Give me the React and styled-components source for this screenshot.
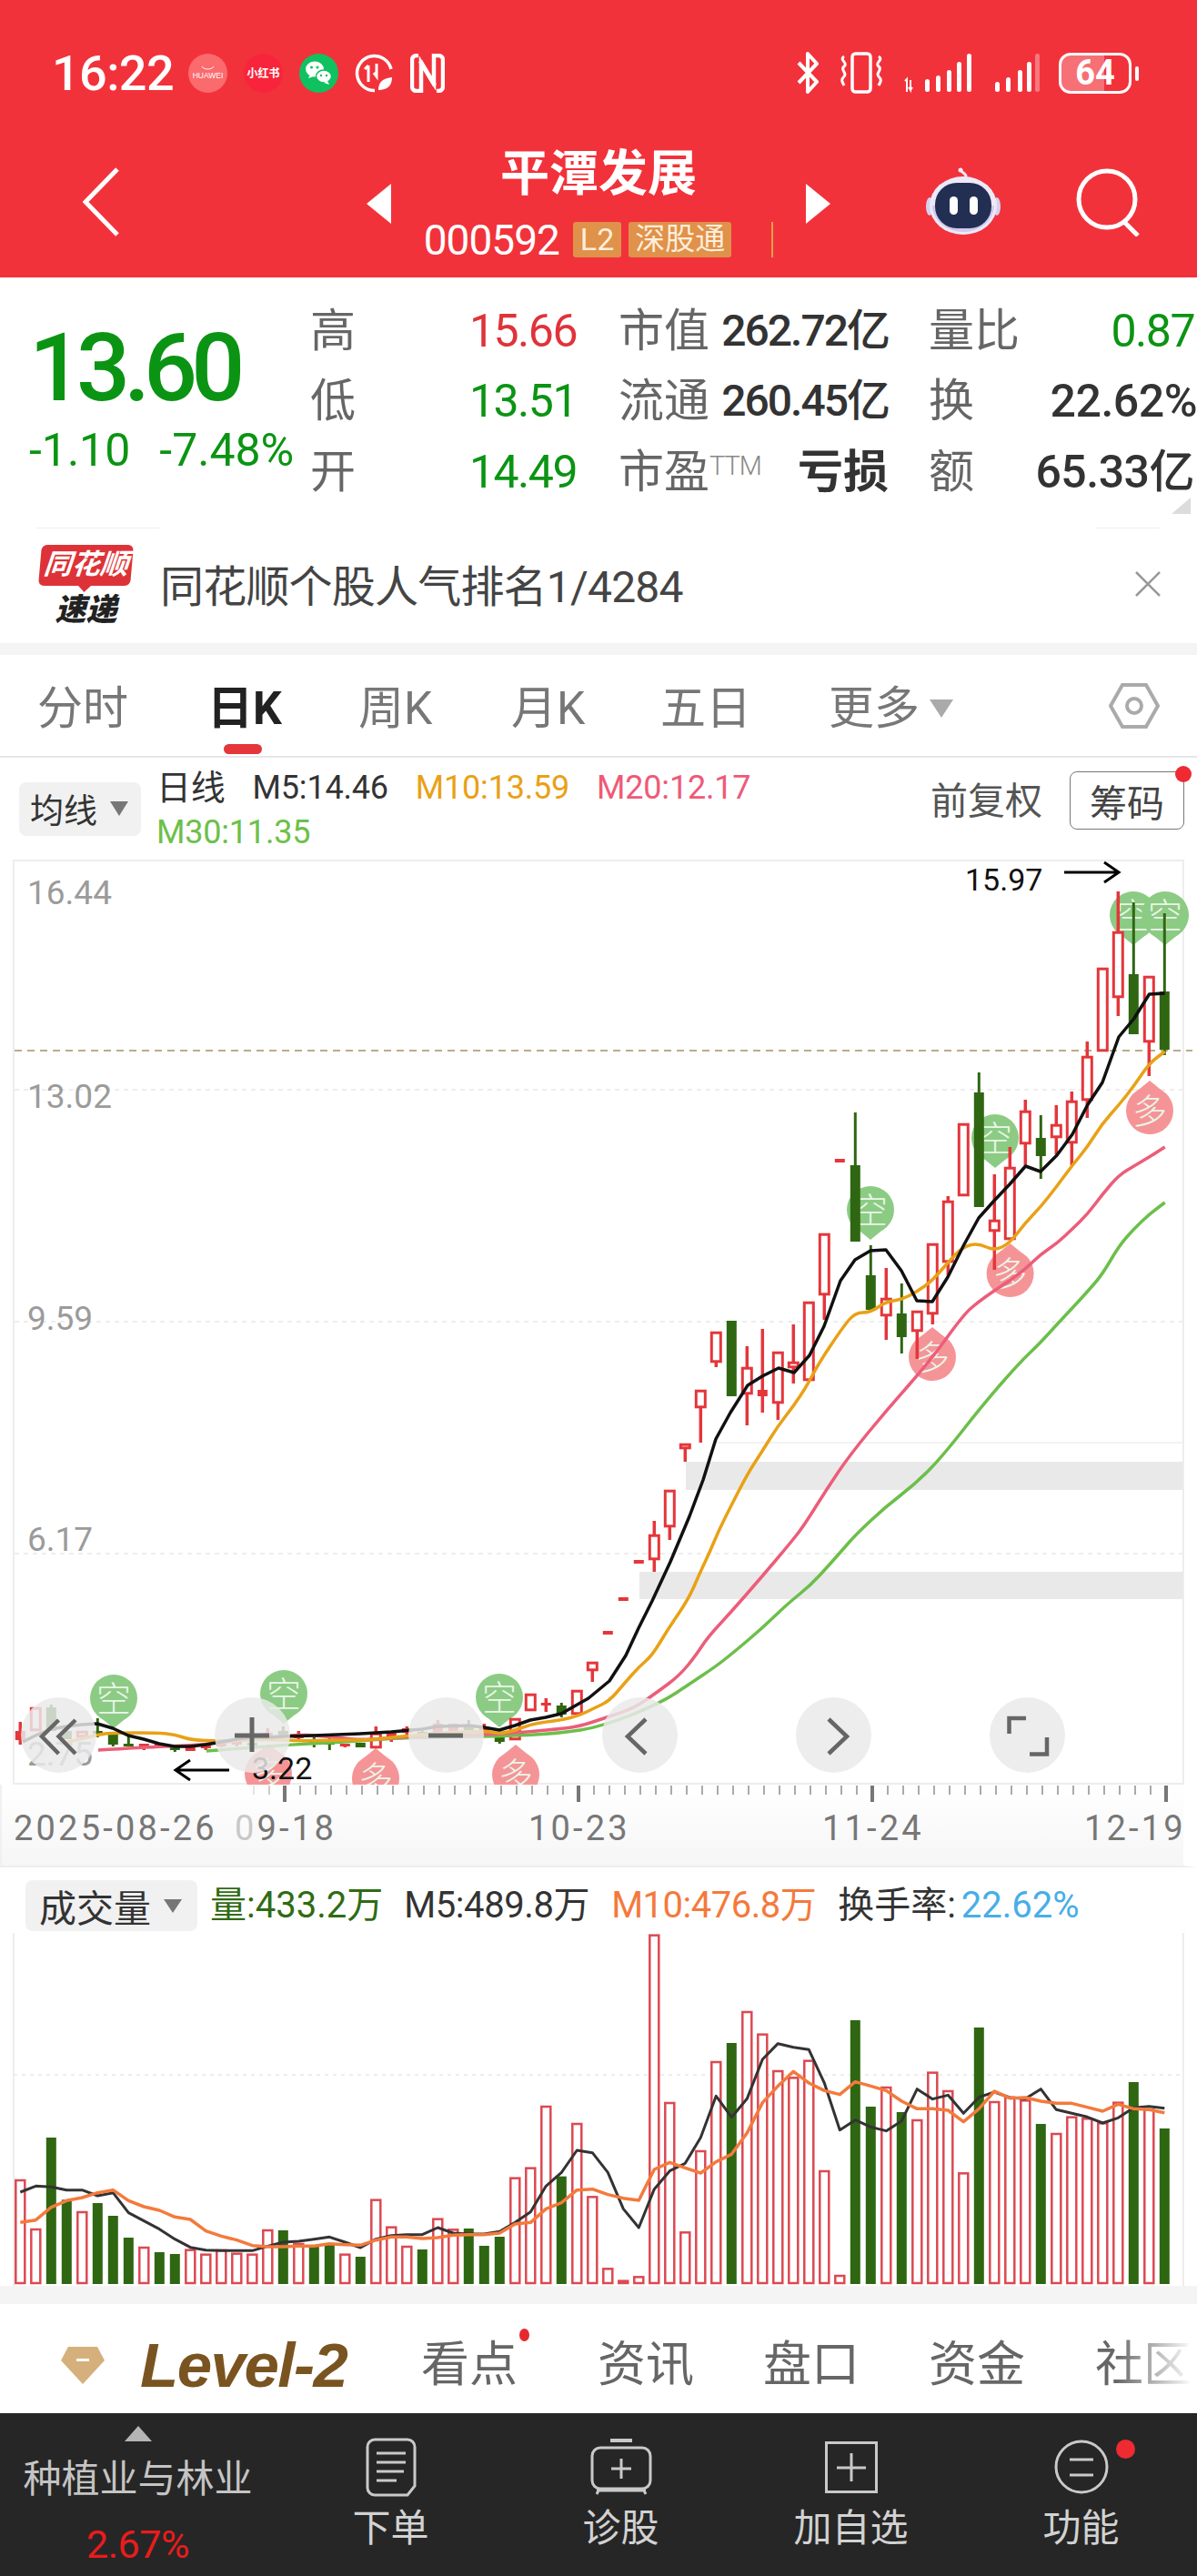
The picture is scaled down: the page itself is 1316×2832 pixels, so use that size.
import React from 'react';
import styled, { createGlobalStyle } from 'styled-components';

const Global = createGlobalStyle`
  html, body { margin: 0; padding: 0; background: #fff; }
  body { font-family: Roboto, "Noto Sans CJK SC", sans-serif; }
  * { box-sizing: border-box; }
`;
const CJK = `Roboto, "Noto Sans CJK SC", sans-serif`;
const GREEN = '#0b9413', RED = '#e0333a', CAND_R = '#e4363b', CAND_G = '#2f6612';

const Page = styled.div`width: 1316px; height: 2832px; overflow: hidden; background: #fff; position: relative; display: flex; flex-direction: column;`;

/* ---------- header ---------- */
const Header = styled.header`height: 305px; background: #f2323a; color: #fff; flex: none;`;
const StatusBar = styled.div`height: 160px; display: flex; align-items: center; padding: 0 72px 0 57px;`;
const Clock = styled.div`font-size: 54px; font-weight: 500; letter-spacing: -0.6px; width: 150px;`;
const StatusLeft = styled.div`display: flex; align-items: center; gap: 18px;`;
const StatusRight = styled.div`margin-left: auto; display: flex; align-items: center; gap: 20px;`;
const Battery = styled.div`position: relative; width: 80px; height: 45px; border: 3px solid #fff; border-radius: 13px;
  display: flex; align-items: center; justify-content: center; font-size: 38px; font-weight: 700;
  background: linear-gradient(90deg, rgba(255,255,255,.3) 64%, transparent 64%);
  &::after { content: ''; position: absolute; right: -11px; top: 12px; width: 4px; height: 16px; background: #fff; border-radius: 2px; }
`;
const NavBar = styled.div`height: 145px; display: grid; grid-template-columns: 403px 510px 1fr;`;
const BackCell = styled.div`padding: 24px 0 0 91px;`;
const CenterCell = styled.div`display: flex; align-items: flex-start; justify-content: space-between; padding-top: 42px;`;
const TriH = styled.div`width: 0; height: 0; border-top: 22px solid transparent; border-bottom: 22px solid transparent;
  ${p => p.$left ? 'border-right: 27px solid #fff;' : 'border-left: 27px solid #fff;'}`;
const StockBlock = styled.div`display: flex; flex-direction: column; align-items: center; margin-top: -40px;`;
const StockName = styled.div`font-size: 54px; font-weight: 700; line-height: 60px;`;
const StockSub = styled.div`display: flex; align-items: center; height: 39px; margin-top: 22px; gap: 8px;`;
const StockCode = styled.span`font-size: 46px; letter-spacing: -1px; margin-right: 7px;`;
const Tag = styled.span`height: 39px; padding: 0 ${p => p.$pad}px; background: #e0914a; border-radius: 3px; font-size: ${p => p.$f}px; line-height: 38px; color: #fdeeda;`;
const OrangeTick = styled.span`width: 2px; height: 39px; background: #e7a04a; margin-left: 36px;`;
const NavRight = styled.div`display: flex; align-items: flex-start; padding: 24px 0 0 104px; gap: 82px;`;

/* ---------- quote ---------- */
const Quote = styled.section`height: 275px; position: relative; display: grid; grid-template-columns: 341px 339px 341px 295px; padding-top: 20px; grid-auto-rows: 77.5px; overflow: hidden; flex: none;
  &::after { content: ''; position: absolute; right: 7px; top: 242px; border-left: 21px solid transparent; border-bottom: 18px solid #dcdcdc; }`;
const PriceCell = styled.div`grid-row: 1 / span 3; padding-left: 32px; display: flex; flex-direction: column;`;
const BigPrice = styled.div`font-size: 104px; font-weight: 500; color: ${GREEN}; letter-spacing: -7px; line-height: 106px; margin: 27px 0 0 0;`;
const ChangeRow = styled.div`display: flex; gap: 32px; font-size: 50px; color: ${GREEN}; line-height: 56px; margin-top: 9px;`;
const Stat = styled.div`display: flex; justify-content: space-between; align-items: center; padding-right: ${p => p.$pr}px; white-space: nowrap; min-width: 0;`;
const StatLabel = styled.span`font-size: 50px; color: #666; line-height: 1;`;
const Ttm = styled.sup`font-size: 29px; font-weight: 300; color: #888; vertical-align: 14px; line-height: 0; letter-spacing: -1px;`;
const StatValue = styled.span`font-size: ${p => p.$size || 50}px; color: ${p => p.$color || '#333'}; font-weight: ${p => p.$w || 400}; letter-spacing: ${p => p.$ls ?? -1.5}px; line-height: 1;`;
const FaintRow = styled.div`height: 1px; display: flex; justify-content: space-between; padding: 0 41px 0 40px; flex: none;`;
const Faint = styled.span`width: ${p => p.$w}px; height: 1px; background: #eee;`;

const AdRow = styled.div`height: 126px; display: flex; align-items: center; padding: 0 40px 0 44px; flex: none;`;
const AdLogo = styled.div`width: 101px; display: flex; flex-direction: column; align-items: center; margin-right: 31px;`;
const AdBox = styled.div`position: relative; width: 101px; height: 45px; background: #dd3338; border-radius: 6px; color: #fff; font-size: 31px; font-weight: 700; font-style: italic; line-height: 44px; text-align: center; transform: skewX(-5deg);
  &::after { content: ''; position: absolute; left: 44px; bottom: -7px; border-left: 7px solid transparent; border-right: 7px solid transparent; border-top: 7px solid #dd3338; }`;
const AdBrand = styled.div`font-size: 34px; font-weight: 900; font-style: italic; color: #222; line-height: 40px; margin-top: 6px;`;
const AdText = styled.div`font-size: 48px; color: #444; letter-spacing: -.8px; margin-top: -6px;`;
const AdClose = styled.div`margin-left: auto;`;
const Gap = styled.div`height: ${p => p.$h}px; background: #f4f4f4; flex: none;`;

/* ---------- tabs ---------- */
const Tabs = styled.nav`height: 113px; display: grid; grid-template-columns: 187px 166px 168px 164px 185px 1fr 97px; padding: 0 0 0 41px; align-items: center; border-bottom: 2px solid #e6e6e6; flex: none;`;
const Tab = styled.div`position: relative; font-size: 50px; color: ${p => p.$on ? '#222' : '#777'}; font-weight: ${p => p.$on ? 700 : 400}; line-height: 1; display: flex; align-items: center; gap: 11px; margin-top: 6px;
  ${p => p.$on && `&::after { content: ''; position: absolute; left: 18px; top: 64px; width: 42px; height: 11px; background: ${CAND_R}; border-radius: 6px; }`}`;
const SmallTri = styled.span`width: 0; height: 0; border-left: ${p => p.$s}px solid transparent; border-right: ${p => p.$s}px solid transparent; border-top: ${p => p.$h}px solid ${p => p.$c || '#aaa'}; display: inline-block;`;
const HexCell = styled.div`display: flex; align-items: center;`;

/* ---------- legend ---------- */
const Legend = styled.div`height: 112px; display: flex; align-items: center; padding: 0 0 0 21px; position: relative; flex: none;`;
const Selector = styled.div`width: ${p => p.$w}px; height: ${p => p.$h}px; background: #f1f1f1; border-radius: 8px; display: flex; align-items: center; font-size: ${p => p.$f}px; color: #333; padding-left: ${p => p.$pl}px; gap: ${p => p.$g}px; flex: none;`;
const LegendText = styled.div`margin-left: 17px; width: 740px; display: flex; flex-wrap: wrap; column-gap: 30px; align-self: flex-start; padding-top: 9px; line-height: 49px;`;
const MaLabel = styled.span`font-size: ${p => p.$f || 36}px; color: ${p => p.$c}; letter-spacing: -.2px; white-space: nowrap;`;
const Break = styled.span`flex-basis: 100%; height: 0;`;
const Adjust = styled.div`position: absolute; left: 1023px; top: 23px; font-size: 41px; color: #555; line-height: 50px;`;
const ChipBtn = styled.div`position: absolute; left: 1176px; top: 15px; width: 126px; height: 64px; border: 1.5px solid #777; border-radius: 8px; font-size: 41px; color: #444; display: flex; align-items: center; justify-content: center;
  &::after { content: ''; position: absolute; right: -9px; top: -7px; width: 18px; height: 18px; border-radius: 50%; background: #ee2a33; }`;

/* ---------- chart ---------- */
const ChartPanel = styled.div`position: relative; width: 1316px; height: 1017px; flex: none;`;
const ChartSvg = styled.svg`display: block;`;
const Controls = styled.div`position: absolute; left: 23px; top: 921px; display: flex; gap: 130px;`;
const Ctrl = styled.div`width: 83px; height: 83px; border-radius: 50%; background: rgba(233,233,233,.84);`;

const TimeAxis = styled.div`height: 91px; position: relative; border-bottom: 2px solid #ededed; flex: none;
  background: linear-gradient(180deg, #fff 0%, #f6f6f6 100%);
  border-left: 2px solid #f0f0f0; border-right: 15px solid #fff;`;
const DateRow = styled.div`position: absolute; left: 13px; top: 26px; display: grid; grid-template-columns: 243px 323px 323px 288px 1fr; width: 1290px;`;
const DateText = styled.span`font-size: 38px; letter-spacing: 3.2px; color: ${p => p.$c || '#777'}; line-height: 44px; white-space: nowrap;`;
const FadeZero = styled.span`color: #c8c8c8;`;

/* ---------- volume ---------- */
const VolPanel = styled.section`height: 460px; flex: none; position: relative;`;
const VolHead = styled.div`height: 72px; padding: 14px 0 0 28px; display: flex; align-items: flex-start;`;
const VolLabel = styled.span`font-size: 40px; line-height: 56px; color: ${p => p.$c || '#333'}; margin-left: ${p => p.$ml || 0}px; white-space: nowrap; letter-spacing: ${p => p.$ls ?? 0}px;`;

/* ---------- bottom ---------- */
const BottomTabs = styled.div`height: 120px; display: grid; grid-template-columns: 87px 309px 194px 182px 182px 183px 1fr; padding: 14px 0 0 67px; align-items: center; position: relative; overflow: hidden; flex: none;
  &::after { content: ''; position: absolute; right: 0; top: 0; bottom: 0; width: 90px; background: linear-gradient(90deg, rgba(255,255,255,0), rgba(255,255,255,.95) 90%); }`;
const Gold = styled.div`font-family: "Liberation Sans", sans-serif; font-size: 69px; font-weight: 700; font-style: italic; color: #7a5420; letter-spacing: -1.5px; line-height: 1;`;
const BTab = styled.div`position: relative; justify-self: start; font-size: 53px; color: #666; line-height: 1; white-space: nowrap;
  ${p => p.$dot && `&::after { content: ''; position: absolute; right: -13px; top: -14px; width: 11px; height: 14px; border-radius: 50%; background: #e42a2f; }`}`;
const Dock = styled.footer`height: 179px; background: #262626; display: grid; grid-template-columns: 303px repeat(4, 253px); flex: none;`;
const Sector = styled.div`display: flex; flex-direction: column; align-items: center; padding-top: 14px;`;
const UpTri = styled.span`width: 0; height: 0; border-left: 15px solid transparent; border-right: 15px solid transparent; border-bottom: 17px solid #b5b5b5;`;
const SectorName = styled.div`font-size: 42px; color: #c4c4c4; line-height: 50px; margin-top: 17px; white-space: nowrap;`;
const SectorPct = styled.div`font-size: 43px; color: #ea1c1c; line-height: 50px; margin-top: 21px; letter-spacing: -.5px;`;
const DockItem = styled.div`position: relative; display: flex; flex-direction: column; align-items: center; padding-top: 26px;`;
const DockIconBox = styled.div`height: 66px; display: flex; align-items: center; justify-content: center;`;
const DockLabel = styled.div`font-size: 42px; color: #d2d2d2; line-height: 48px; margin-top: 11px;`;
const DockDot = styled.span`position: absolute; left: 165px; top: 29px; width: 21px; height: 21px; border-radius: 50%; background: #ee2a33;`;

/* ---------- data ---------- */
const X = i => 22.3 + 17 * i;
// [high, top, bottom, low, kind]  r hollow red, R filled red, g green
const K = [
  [1893,1903,1913,1918,'R'],[1877,1877,1903,1903,'r'],[1874,1877,1903,1903,'g'],[1900,1903,1912,1912,'g'],[1903,1903,1910,1912,'r'],
  [1889,1903,1906,1910,'g'],[1905,1907,1918,1920,'g'],[1909,1917,1919,1920,'g'],[1917,1917,1922,1924,'R'],[1916,1917,1919,1920,'R'],
  [1921,1921,1924,1926,'g'],[1919,1919,1925,1925,'R'],[1917,1918,1922,1924,'R'],[1916,1917,1919,1921,'R'],[1914,1915,1917,1920,'R'],
  [1915,1916,1918,1920,'g'],[1900,1905,1908,1912,'R'],[1898,1903,1908,1908,'g'],[1903,1907,1911,1912,'R'],[1910,1915,1917,1921,'g'],
  [1910,1915,1917,1924,'g'],[1917,1917,1919,1921,'R'],[1916,1916,1921,1921,'g'],[1898,1905,1922,1922,'r'],[1903,1903,1910,1915,'R'],
  [1898,1900,1905,1908,'R'],[1903,1904,1908,1909,'g'],[1891,1895,1906,1906,'R'],[1895,1895,1903,1904,'R'],[1891,1897,1902,1902,'g'],
  [1895,1898,1903,1904,'R'],[1905,1908,1915,1917,'g'],[1889,1889,1913,1913,'r'],[1862,1862,1881,1881,'r'],[1867,1872,1874,1882,'R'],
  [1872,1875,1885,1888,'g'],[1858,1858,1885,1885,'r'],[1827,1827,1837,1849,'r'],[1793,1793,1797,1797,'R'],[1756,1756,1760,1760,'R'],
  [1715,1715,1719,1719,'R'],[1672,1687,1715,1728,'r'],[1638,1638,1679,1693,'r'],[1587,1587,1593,1607,'r'],[1528,1528,1548,1586,'r'],
  [1464,1464,1498,1503,'r'],[1452,1452,1535,1535,'g'],[1480,1503,1533,1567,'r'],[1461,1528,1535,1553,'R'],[1486,1486,1543,1561,'r'],
  [1456,1497,1504,1521,'r'],[1431,1431,1518,1518,'r'],[1356,1356,1424,1451,'r'],[1274,1274,1278,1278,'R'],[1223,1281,1365,1365,'g'],
  [1369,1402,1440,1440,'g'],[1394,1427,1447,1473,'r'],[1411,1444,1470,1488,'g'],[1441,1441,1464,1494,'r'],[1367,1367,1445,1456,'r'],
  [1315,1320,1388,1402,'r'],[1235,1235,1315,1315,'r'],[1179,1201,1327,1327,'g'],[1291,1341,1354,1396,'r'],[1261,1283,1363,1363,'r'],
  [1209,1221,1258,1281,'r'],[1226,1251,1271,1296,'g'],[1215,1236,1251,1269,'r'],[1200,1210,1257,1281,'r'],[1145,1161,1210,1229,'r'],
  [1064,1064,1156,1156,'r'],[980,1024,1097,1117,'r'],[992,1071,1137,1137,'g'],[1073,1073,1146,1183,'r'],[1004,1090,1154,1160,'g'],
];
const pts = a => a.map(p => p.join(',')).join(' ');
const smooth = a => {
  let d = `M${a[0][0]} ${a[0][1]}`;
  for (let i = 1; i < a.length - 1; i++) {
    const mx = (a[i][0] + a[i + 1][0]) / 2, my = (a[i][1] + a[i + 1][1]) / 2;
    d += ` Q${a[i][0]} ${a[i][1]} ${mx} ${my}`;
  }
  const l = a[a.length - 1];
  return `${d} L${l[0]} ${l[1]}`;
};
const MA5 = [[25,1915],[39,1908],[56,1901],[73,1898],[90,1896],[107,1895],[124,1900],[141,1908],[158,1912],[175,1917],[192,1920],[209,1920],[226,1918],[243,1915],[260,1912],[277,1910],[294,1910],[311,1909],[345,1908],[396,1906],[430,1904],[464,1901],[481,1898],[515,1897],[532,1899],[549,1902],[566,1897],[583,1891],[600,1888],[617,1884],[647,1867],[670,1848],[688,1820],[702,1790],[717,1760],[737,1717],[758,1667],[773,1627],[787,1582],[803,1553],[822,1523],[838,1513],[856,1504],[873,1509],[890,1490],[906,1458],[924,1408],[940,1385],[957,1375],[974,1374],[991,1397],[1008,1430],[1025,1431],[1042,1404],[1059.5,1369],[1076,1339],[1093,1320],[1110,1302],[1127.5,1282],[1144,1288],[1162,1270],[1179,1247],[1195.5,1215],[1212,1190],[1230,1140],[1246.6,1120],[1263.5,1093],[1280.7,1092]];
const MA10 = [[67,1917],[107,1907],[124,1905],[173,1905],[193,1907],[210,1913],[243,1914],[293,1912],[333,1914],[360,1913],[400,1913],[413,1912],[450,1908],[490,1905],[533,1903],[550,1906],[567,1902],[583,1896],[600,1893],[617,1891],[637,1886],[653,1878],[670,1870],[687,1850],[703,1832],[717,1820],[735,1790],[757,1758],[770,1728],[780,1707],[790,1683],[803,1657],[822,1620],[837,1597],[855,1568],[873,1545],[888,1522],[900,1499],[926,1460],[940,1443],[957,1443],[974,1431],[991,1429],[1008,1420],[1025,1408],[1042,1388],[1059.5,1370],[1076,1367],[1093,1375],[1110,1367],[1127.5,1344],[1144,1327],[1162,1304],[1179,1281],[1195.5,1261],[1212,1235],[1230,1215],[1246.6,1194],[1263.5,1169],[1280.7,1156]];
const MA20 = [[108,1924],[157,1921],[207,1919],[233,1917],[293,1910],[328,1907],[347,1908],[377,1911],[400,1913],[450,1909],[533,1907],[567,1905],[613,1901],[637,1898],[667,1888],[697,1878],[723,1860],[747,1842],[765,1820],[778,1800],[803,1773],[838,1733],[870,1695],[884,1677],[909,1637],[934,1600],[975,1550],[1022,1497],[1059.5,1445],[1076,1431],[1093,1419],[1110,1408],[1127.5,1395],[1144,1379],[1162,1367],[1179,1351],[1195.5,1335],[1212,1313],[1230,1292],[1246.6,1282],[1263.5,1272],[1280.7,1261]];
const MA30 = [[227,1925],[267,1922],[320,1918],[380,1915],[447,1910],[547,1909],[613,1906],[663,1898],[727,1872],[760,1850],[787,1832],[806,1817],[838,1790],[866,1763],[891,1743],[912,1720],[927,1703],[941,1687],[973,1657],[1008,1630],[1037,1600],[1080,1545],[1120,1499],[1144,1476],[1162,1456],[1179,1438],[1195.5,1420],[1212,1401],[1230,1370],[1246.6,1351],[1263.5,1335],[1280.7,1322]];
const KONG = [[125,1867],[312,1862],[549,1866],[957,1330],[1094,1251],[1246,1006],[1281,1006]];
const DUO = [[295,1950],[413,1955],[567,1951],[1025,1492],[1110.6,1400],[1264,1221]];
const GREYBANDS = [[754,1607,31],[703,1728,30]];

const V = [[1008,'r'],[1170,'r'],[870,'g'],[1075,'g'],[1113,'r'],[1086,'g'],[1128,'g'],[1200,'g'],[1230,'r'],[1248,'g'],[1254,'g'],[1238,'r'],[1253,'r'],[1239,'r'],[1250,'r'],[1253,'r'],[1173,'r'],[1176,'g'],[1218,'r'],[1228,'g'],[1220,'g'],[1253,'r'],[1263,'g'],[1073,'r'],[1163,'r'],[1227,'r'],[1239,'g'],[1136,'r'],[1171,'r'],[1170,'g'],[1227,'g'],[1197,'g'],[1001,'r'],[968,'r'],[765,'r'],[998,'g'],[822,'r'],[1063,'r'],[1300,'r'],[1340,'R'],[1327,'r'],[200,'r'],[753,'r'],[1180,'r'],[912,'r'],[618,'r'],[558,'g'],[453,'r'],[527,'r'],[648,'r'],[670,'r'],[614,'r'],[978,'r'],[1323,'r'],[483,'g'],[768,'g'],[702,'r'],[786,'g'],[810,'r'],[653,'r'],[714,'r'],[985,'r'],[507,'g'],[750,'r'],[735,'r'],[745,'r'],[825,'g'],[855,'r'],[800,'r'],[805,'r'],[820,'r'],[752,'r'],[687,'g'],[775,'r'],[840,'g']];
const VM5 = [1050,1030,1033,1043,1043,1062,1052,1118,1145,1172,1205,1232,1241,1243,1243,1243,1228,1215,1212,1205,1198,1215,1233,1205,1193,1190,1190,1167,1185,1188,1188,1180,1150,1115,1030,985,912,920,985,1105,1167,1040,980,955,870,733,803,742,612,560,572,580,690,845,812,835,848,815,710,743,730,790,737,720,738,742,710,778,790,802,822,805,772,767,773];
const VM10 = [1150,1142,1100,1078,1068,1052,1043,1078,1098,1110,1132,1140,1178,1195,1208,1226,1230,1230,1228,1228,1220,1223,1225,1208,1198,1198,1203,1200,1192,1190,1190,1185,1155,1150,1105,1085,1043,1040,1058,1070,1077,975,952,970,987,950,925,855,755,700,652,690,715,728,686,700,715,750,775,775,780,818,775,717,740,738,750,757,757,770,783,760,775,778,788];
const vy = z => 2060 + z / 3;

/* ---------- drawings ---------- */
const Pin = ({ x, y, kind }) => {
  const up = kind === 'k';
  const fill = up ? '#8ccb84' : '#f59497';
  const tip = up ? y + 33 : y - 33;
  const b = up ? y + 20 : y - 20;
  return (
    <g>
      <circle cx={x} cy={y} r={26} fill={fill} />
      <path d={`M${x - 16} ${b} L${x} ${tip} L${x + 16} ${b} Z`} fill={fill} />
      <text x={x} y={y + 14} textAnchor="middle" fontSize="38" fontFamily={CJK} fontWeight="300" fill="#eaf6e8">{up ? '空' : '多'}</text>
    </g>
  );
};
const Candle = ({ i, d }) => {
  const [h, t, b, l, k] = d;
  const x = X(i);
  const c = k === 'g' ? CAND_G : CAND_R;
  return (
    <g>
      {h < t && <line x1={x} x2={x} y1={h} y2={t} stroke={c} strokeWidth={k === 'g' ? 3 : 3.5} />}
      {l > b && <line x1={x} x2={x} y1={b} y2={l} stroke={c} strokeWidth={k === 'g' ? 3 : 3.5} />}
      {k === 'r'
        ? <rect x={x - 5} y={t + 1.2} width={10} height={b - t - 2.4} fill="#fff" stroke={c} strokeWidth={3} />
        : <rect x={x - 5.5} y={t} width={11} height={Math.max(b - t, 3)} fill={c} />}
    </g>
  );
};
const Arrow = ({ x1, x2, y }) => {
  const dir = x2 > x1 ? -1 : 1;
  return <path d={`M${x1} ${y} H${x2} M${x2 + dir * 16} ${y - 11} L${x2} ${y} L${x2 + dir * 16} ${y + 11}`} fill="none" stroke="#000" strokeWidth={3} />;
};
const AxisText = ({ x, y, children }) => <text x={x} y={y} fontFamily={CJK} fontSize="37" fill="#9b9b9b">{children}</text>;

const PriceChart = () => (
  <ChartSvg width="1316" height="1017" viewBox="0 945 1316 1017">
    <line x1="15" x2="1301" y1="946" y2="946" stroke="#ededed" strokeWidth="2" />
    <line x1="15" x2="1301" y1="1961" y2="1961" stroke="#ededed" strokeWidth="2" />
    <line x1="15" x2="15" y1="945" y2="1962" stroke="#ededed" strokeWidth="2" />
    <line x1="1301" x2="1301" y1="945" y2="1962" stroke="#ededed" strokeWidth="2" />
    {[1198, 1453, 1708].map(y => <line key={y} x1="16" x2="1300" y1={y} y2={y} stroke="#dcdcdc" strokeDasharray="5 5" />)}
    <line x1="787" x2="1300" y1="1586" y2="1586" stroke="#e6e6e6" />
    {GREYBANDS.map(([x, y, h]) => <rect key={y} x={x} y={y} width={1300 - x} height={h} fill="#e9e9e9" />)}
    <AxisText x={30} y={994}>16.44</AxisText>
    <AxisText x={30} y={1218}>13.02</AxisText>
    <AxisText x={30} y={1462}>9.59</AxisText>
    <AxisText x={30} y={1705}>6.17</AxisText>
    <AxisText x={30} y={1941}>2.75</AxisText>
    <line x1="16" x2="1311" y1="1155" y2="1155" stroke="#bcab8c" strokeWidth="2" strokeDasharray="8 6" />
    {KONG.map(([x, y]) => <Pin key={x} x={x} y={y} kind="k" />)}
    {DUO.map(([x, y]) => <Pin key={x} x={x} y={y} kind="d" />)}
    {K.map((d, i) => <Candle key={i} i={i} d={d} />)}
    <path d={smooth(MA30)} fill="none" stroke="#6cbf4a" strokeWidth="3.5" />
    <path d={smooth(MA20)} fill="none" stroke="#ec5d79" strokeWidth="3.5" />
    <path d={smooth(MA10)} fill="none" stroke="#e8a116" strokeWidth="3.5" />
    <polyline points={pts(MA5)} fill="none" stroke="#111" strokeWidth="3.5" strokeLinejoin="round" />
    <Arrow x1={1170} x2={1230} y={959} />
    <text x={1061} y={979} fontFamily={CJK} fontSize="34" fill="#111">15.97</text>
    <Arrow x1={252} x2={193} y={1946} />
    <text x={277} y={1956} fontFamily={CJK} fontSize="34" fill="#111">3.22</text>
  </ChartSvg>
);
const CtrlIcon = ({ children }) => <svg width="83" height="83" viewBox="0 0 83 83" fill="none" stroke="#666" strokeWidth="4.5">{children}</svg>;

const Ticks = () => (
  <svg width="1300" height="30" viewBox="0 1962 1300 30" style={{ display: 'block' }}>
    {Array.from({ length: 60 }, (_, k) => {
      const i = k + 15; const x = X(i) - 0.3;
      const major = [17, 36, 55, 74].includes(i);
      return <rect key={i} x={x - (major ? 2 : 1)} y="1963" width={major ? 4 : 2} height={major ? 18 : 10} fill={major ? '#777' : '#aaa'} opacity={i === 15 ? .3 : i === 16 ? .6 : 1} />;
    })}
  </svg>
);

const VolumeChart = () => (
  <ChartSvg width="1316" height="388" viewBox="0 2125 1316 388">
    <line x1="15" x2="15" y1="2125" y2="2513" stroke="#ededed" strokeWidth="2" />
    <line x1="1301" x2="1301" y1="2125" y2="2513" stroke="#ededed" strokeWidth="2" />
    <line x1="15" x2="1300" y1="2281" y2="2281" stroke="#e8e8e8" strokeWidth="1.5" strokeDasharray="4 5" />
    {V.map(([z, k], i) => {
      const x = X(i), t = vy(z);
      if (k === 'g') return <rect key={i} x={x - 5.5} y={t} width={11} height={2511 - t} fill={CAND_G} />;
      return <rect key={i} x={x - 5} y={t + 1} width={10} height={2510 - t - 1} fill={k === 'R' ? '#e4364a' : '#fff'} stroke="#dc4952" strokeWidth="2.5" />;
    })}
    <polyline points={pts(VM5.map((z, i) => [X(i), vy(z)]))} fill="none" stroke="#333" strokeWidth="3" strokeLinejoin="round" />
    <polyline points={pts(VM10.map((z, i) => [X(i), vy(z)]))} fill="none" stroke="#f37a3c" strokeWidth="3.5" strokeLinejoin="round" />
  </ChartSvg>
);

const Huawei = () => (
  <svg width="43" height="43" viewBox="0 0 43 43"><circle cx="21.5" cy="21.5" r="21.5" fill="#fb6a6d" />
    <path d="M15 14c2 4 11 4 13 0" fill="none" stroke="#fff" strokeWidth="1" />
    <text x="21.5" y="27" textAnchor="middle" fontSize="8.5" fill="#fff" fontFamily="Liberation Sans, sans-serif">HUAWEI</text></svg>
);
const Xhs = () => (
  <svg width="43" height="43" viewBox="0 0 43 43"><circle cx="21.5" cy="21.5" r="21.5" fill="#f8243c" />
    <text x="21.5" y="26" textAnchor="middle" fontSize="12" fontWeight="700" fill="#fff" fontFamily={CJK}>小红书</text></svg>
);
const Wechat = () => (
  <svg width="43" height="43" viewBox="0 0 43 43"><circle cx="21.5" cy="21.5" r="21.5" fill="#0fc160" />
    <ellipse cx="17" cy="17" rx="10" ry="8.5" fill="#fff" /><path d="M12 23l-2 4 6-2z" fill="#fff" />
    <ellipse cx="27" cy="25" rx="8.5" ry="7" fill="#fff" stroke="#0fc160" strokeWidth="1.5" /><path d="M31 30l2 4-6-2z" fill="#fff" />
    <circle cx="13.5" cy="15" r="1.5" fill="#0fc160" /><circle cx="20" cy="15" r="1.5" fill="#0fc160" />
    <circle cx="24" cy="24" r="1.2" fill="#0fc160" /><circle cx="30" cy="24" r="1.2" fill="#0fc160" /></svg>
);
const SyncIcon = () => (
  <svg width="43" height="43" viewBox="0 0 43 43" fill="none" stroke="#fff" strokeWidth="3.5">
    <path d="M40 17A19 19 0 1 0 22 40.5" /><path d="M15 13v18M11 17l4-4" strokeWidth="3" /><path d="M24 11v14l-3-4" strokeWidth="3" />
    <path d="M26 40c0-10 6-13 15-14 0 9-5 14-15 14z" fill="#fff" stroke="none" /></svg>
);
const Nfc = () => (
  <svg width="38" height="43" viewBox="0 0 38 43" fill="none" stroke="#fff" strokeWidth="4.5">
    <path d="M9 2H7a5 5 0 0 0-5 5v29a5 5 0 0 0 5 5h5V10l15 25" /><path d="M29 41h2a5 5 0 0 0 5-5V7a5 5 0 0 0-5-5h-5v31L11 8" /></svg>
);
const Bt = () => (
  <svg width="26" height="46" viewBox="0 0 26 46" fill="none" stroke="#fff" strokeWidth="4" strokeLinejoin="round">
    <path d="M3 12l20 21-10 11V2l10 11L3 34" /></svg>
);
const Vibrate = () => (
  <svg width="52" height="46" viewBox="0 0 52 46" fill="none" stroke="#fff" strokeWidth="3.5">
    <rect x="16" y="2" width="20" height="42" rx="3.5" />
    <path d="M7 5c-6 4 5 7 0 11s4 7 0 11-2 6 0 10M45 5c6 4-5 7 0 11s-4 7 0 11 2 6 0 10" strokeWidth="3" /></svg>
);
const Signal = ({ w, bars, one }) => (
  <svg width={w} height="44" viewBox={`0 0 ${w} 44`}>
    {one && <path d="M2 31l2-2v14M8 30v11l-2-3M8 41l2-3" fill="none" stroke="#fff" strokeWidth="2" />}
    {bars.map(([x, h, o], i) => <rect key={i} x={x} y={43 - h} width="5" height={h} rx="2.5" fill="#fff" opacity={o || 1} />)}
  </svg>
);
const Robot = () => (
  <svg width="84" height="76" viewBox="0 0 84 76">
    <path d="M40 2c-2 4 6 4 5 9" fill="none" stroke="#ece9f8" strokeWidth="3" /><circle cx="39" cy="3" r="2.5" fill="#f2effa" />
    <ellipse cx="5" cy="43" rx="4" ry="10" fill="#d6d0ef" /><ellipse cx="79" cy="43" rx="4" ry="10" fill="#d6d0ef" />
    <ellipse cx="42" cy="42" rx="37" ry="32" fill="#ece9f8" />
    <path d="M8 42a34 29 0 0 0 68 0" fill="#bfb6ea" opacity=".6" />
    <rect x="11" y="17" width="62" height="50" rx="24" fill="#232f52" />
    <rect x="27" y="32" width="9" height="20" rx="4.5" fill="#fff" /><rect x="49" y="32" width="9" height="20" rx="4.5" fill="#fff" />
  </svg>
);
const Ico = ({ w, h, vb, children, sw = 3, c = '#c9c9c9' }) => <svg width={w} height={h} viewBox={vb || `0 0 ${w} ${h}`} fill="none" stroke={c} strokeWidth={sw}>{children}</svg>;

export default function App() {
  return (
    <Page>
      <Global />
      <Header>
        <StatusBar>
          <Clock>16:22</Clock>
          <StatusLeft>
            <Huawei /><Xhs /><Wechat /><SyncIcon /><Nfc />
          </StatusLeft>
          <StatusRight>
            <Bt /><Vibrate />
            <Signal w={76} one bars={[[24, 14], [36, 18], [48, 24], [59, 33], [70, 42]]} />
            <Signal w={55} bars={[[5, 11], [17, 16], [30, 24], [40, 33], [49, 42, .35]]} />
            <Battery>64</Battery>
          </StatusRight>
        </StatusBar>
        <NavBar>
          <BackCell>
            <svg width="40" height="76" viewBox="0 0 40 76" fill="none" stroke="#fff" strokeWidth="5"><path d="M38 2L3 38l35 36" /></svg>
          </BackCell>
          <CenterCell>
            <TriH $left />
            <StockBlock>
              <StockName>平潭发展</StockName>
              <StockSub>
                <StockCode>000592</StockCode>
                <Tag $pad={8} $f={34}>L2</Tag>
                <Tag $pad={7} $f={33}>深股通</Tag>
                <OrangeTick />
              </StockSub>
            </StockBlock>
            <TriH />
          </CenterCell>
          <NavRight>
            <Robot />
            <svg width="72" height="76" viewBox="0 0 72 76" fill="none" stroke="#fff" strokeWidth="5"><circle cx="34" cy="35" r="31" /><path d="M53 60l15 15" /></svg>
          </NavRight>
        </NavBar>
      </Header>

      <Quote>
        <PriceCell>
          <BigPrice>13.60</BigPrice>
          <ChangeRow><span>-1.10</span><span>-7.48%</span></ChangeRow>
        </PriceCell>
        <Stat $pr={46}><StatLabel>高</StatLabel><StatValue $color={RED}>15.66</StatValue></Stat>
        <Stat $pr={44}><StatLabel>市值</StatLabel><StatValue $size={48} $w={500} $ls={-2}>262.72亿</StatValue></Stat>
        <Stat $pr={3}><StatLabel>量比</StatLabel><StatValue $color={GREEN}>0.87</StatValue></Stat>
        <Stat $pr={46}><StatLabel>低</StatLabel><StatValue $color={GREEN}>13.51</StatValue></Stat>
        <Stat $pr={44}><StatLabel>流通</StatLabel><StatValue $size={48} $w={500} $ls={-2}>260.45亿</StatValue></Stat>
        <Stat $pr={-5}><StatLabel>换</StatLabel><StatValue $size={50} $w={500} $ls={-.5}>22.62%</StatValue></Stat>
        <Stat $pr={46}><StatLabel>开</StatLabel><StatValue $color={GREEN}>14.49</StatValue></Stat>
        <Stat $pr={44}><StatLabel>市盈<Ttm>TTM</Ttm></StatLabel><StatValue $size={50} $w={700} $ls={0}>亏损</StatValue></Stat>
        <Stat $pr={3}><StatLabel>额</StatLabel><StatValue $size={50} $w={500} $ls={-.5}>65.33亿</StatValue></Stat>
      </Quote>
      <FaintRow><Faint $w={135} /><Faint $w={70} /></FaintRow>
      <AdRow>
        <AdLogo>
          <AdBox>同花顺</AdBox>
          <AdBrand>速递</AdBrand>
        </AdLogo>
        <AdText>同花顺个股人气排名1/4284</AdText>
        <AdClose>
          <svg width="28" height="28" viewBox="0 0 28 28" fill="none" stroke="#999" strokeWidth="2.5"><path d="M1 1l26 26M27 1L1 27" /></svg>
        </AdClose>
      </AdRow>
      <Gap $h={13} />

      <Tabs>
        <Tab>分时</Tab>
        <Tab $on>日K</Tab>
        <Tab>周K</Tab>
        <Tab>月K</Tab>
        <Tab>五日</Tab>
        <Tab>更多<SmallTri $s={13} $h={20} /></Tab>
        <HexCell>
          <svg width="56" height="52" viewBox="0 0 56 52" fill="none" stroke="#aaa" strokeWidth="4"><path d="M15 3h26l13 23-13 23H15L2 26z" /><circle cx="28" cy="26" r="8" /></svg>
        </HexCell>
      </Tabs>

      <Legend>
        <Selector $w={134} $h={59} $f={37} $pl={12} $g={14}>均线<SmallTri $s={10} $h={16} $c="#777" /></Selector>
        <LegendText>
          <MaLabel $f={38} $c="#333">日线</MaLabel>
          <MaLabel $c="#333">M5:14.46</MaLabel>
          <MaLabel $c="#e9a115">M10:13.59</MaLabel>
          <MaLabel $c="#ee5a78">M20:12.17</MaLabel>
          <Break />
          <MaLabel $c="#6cc04a">M30:11.35</MaLabel>
        </LegendText>
        <Adjust>前复权</Adjust>
        <ChipBtn>筹码</ChipBtn>
      </Legend>

      <ChartPanel>
        <PriceChart />
        <Controls>
          <Ctrl><CtrlIcon><path d="M41.5 25L23 43l18.500 19M60 25L41.500 43l18.500 19" /></CtrlIcon></Ctrl>
          <Ctrl><CtrlIcon><path d="M22 42h38M41 22v38" strokeWidth="5" /></CtrlIcon></Ctrl>
          <Ctrl><CtrlIcon><path d="M22 42h38" strokeWidth="5" /></CtrlIcon></Ctrl>
          <Ctrl><CtrlIcon><path d="M48 24L28 43l20 19" /></CtrlIcon></Ctrl>
          <Ctrl><CtrlIcon><path d="M36 24l20 19-20 19" /></CtrlIcon></Ctrl>
          <Ctrl><CtrlIcon><path d="M21.500 40V23H40M44 62.500h19V44" /></CtrlIcon></Ctrl>
        </Controls>
      </ChartPanel>
      <TimeAxis>
        <Ticks />
        <DateRow>
          <DateText>2025-08-26</DateText>
          <DateText><FadeZero>0</FadeZero>9-18</DateText>
          <DateText>10-23</DateText>
          <DateText>11-24</DateText>
          <DateText>12-19</DateText>
        </DateRow>
      </TimeAxis>

      <VolPanel>
        <VolHead>
          <Selector $w={189} $h={56} $f={41} $pl={15} $g={14}>成交量<SmallTri $s={10} $h={15} $c="#777" /></Selector>
          <VolLabel $c="#2f6b14" $ml={14}>量:433.2万</VolLabel>
          <VolLabel $ml={23} $ls={-.4}>M5:489.8万</VolLabel>
          <VolLabel $c="#f37a3c" $ml={24} $ls={-.5}>M10:476.8万</VolLabel>
          <VolLabel $ml={24}>换手率:</VolLabel>
          <VolLabel $c="#48ade8" $ml={6}>22.62%</VolLabel>
        </VolHead>
        <VolumeChart />
      </VolPanel>
      <Gap $h={20} />

      <BottomTabs>
        <svg width="48" height="42" viewBox="0 0 48 42"><path d="M8 1h32l8 15-24 26L0 16z" fill="#d5b07c" /><rect x="17" y="14" width="14" height="3" fill="#fff" /></svg>
        <Gold>Level-2</Gold>
        <BTab $dot>看点</BTab>
        <BTab>资讯</BTab>
        <BTab>盘口</BTab>
        <BTab>资金</BTab>
        <BTab>社区</BTab>
      </BottomTabs>
      <Dock>
        <Sector>
          <UpTri />
          <SectorName>种植业与林业</SectorName>
          <SectorPct>2.67%</SectorPct>
        </Sector>
        <DockItem>
          <DockIconBox>
            <Ico w={56} h={65}><path d="M10 2h36a8 8 0 0 1 8 8v43l-8 10H10a8 8 0 0 1-8-8V10a8 8 0 0 1 8-8z" /><path d="M12 17h32M12 27h32M12 37h30M12 47h22" /></Ico>
          </DockIconBox>
          <DockLabel>下单</DockLabel>
        </DockItem>
        <DockItem>
          <DockIconBox>
            <Ico w={68} h={62}><path d="M22 2h24" strokeWidth="4" /><rect x="2" y="10" width="64" height="45" rx="9" /><path d="M34 22v22M23 33h22M10 55l-3 6M58 55l3 6M7 57h54" /></Ico>
          </DockIconBox>
          <DockLabel>诊股</DockLabel>
        </DockItem>
        <DockItem>
          <DockIconBox>
            <Ico w={58} h={57}><rect x="1.500" y="1.500" width="55" height="54" /><path d="M29 13v31M13 29h32" /></Ico>
          </DockIconBox>
          <DockLabel>加自选</DockLabel>
        </DockItem>
        <DockItem>
          <DockIconBox>
            <Ico w={60} h={60}><circle cx="30" cy="30" r="28" /><path d="M17 22h26M17 39h26" /></Ico>
          </DockIconBox>
          <DockLabel>功能</DockLabel>
          <DockDot />
        </DockItem>
      </Dock>
    </Page>
  );
}
